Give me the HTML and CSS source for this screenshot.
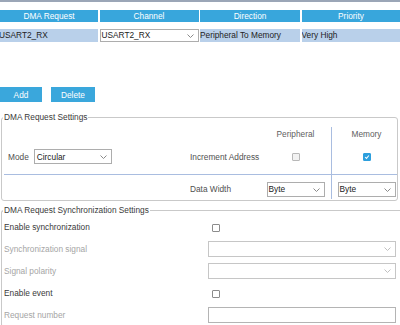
FILE: index.html
```html
<!DOCTYPE html>
<html lang="en">
  <head>
    <meta charset="UTF-8" />
    <title>DMA Settings</title>
    <link rel="stylesheet" href="styles.css">
  </head>
  <body>
    <div class="topline"></div>

    <div class="dma-table">
      <div class="th">DMA Request</div>
      <div class="th">Channel</div>
      <div class="th">Direction</div>
      <div class="th">Priority</div>

      <div class="td first">USART2_RX</div>
      <div class="td plain">
        <div class="select small">
          <span>USART2_RX</span>
          <svg class="chev" viewBox="0 0 7 4"><polyline points="0.5,0.5 3.5,3.5 6.5,0.5" /></svg>
        </div>
      </div>
      <div class="td">Peripheral To Memory</div>
      <div class="td">Very High</div>
    </div>

    <div class="actions">
      <button class="btn add">Add</button>
      <button class="btn delete">Delete</button>
    </div>

    <fieldset class="group settings">
      <legend>DMA Request Settings</legend>
      <div class="settings-grid">
        <div></div>
        <div></div>
        <div class="col-head">Peripheral</div>
        <div class="col-head mem">Memory</div>

        <div class="cell mode">
          <span>Mode</span>
          <div class="select mode-select">
            <span>Circular</span>
            <svg class="chev" viewBox="0 0 7 4"><polyline points="0.5,0.5 3.5,3.5 6.5,0.5" /></svg>
          </div>
        </div>
        <div class="cell label">Increment Address</div>
        <div class="cell center"><span class="check disabled"></span></div>
        <div class="cell center mem">
          <span class="check checked">
            <svg viewBox="0 0 8 8"><polyline points="1.5,4 3.3,5.8 6.5,2" /></svg>
          </span>
        </div>

        <div class="cell sep first-sep"></div>
        <div class="cell sep label">Data Width</div>
        <div class="cell sep center">
          <div class="select width-select">
            <span>Byte</span>
            <svg class="chev" viewBox="0 0 7 4"><polyline points="0.5,0.5 3.5,3.5 6.5,0.5" /></svg>
          </div>
        </div>
        <div class="cell sep center mem">
          <div class="select width-select">
            <span>Byte</span>
            <svg class="chev" viewBox="0 0 7 4"><polyline points="0.5,0.5 3.5,3.5 6.5,0.5" /></svg>
          </div>
        </div>
      </div>
    </fieldset>

    <fieldset class="group sync">
      <legend>DMA Request Synchronization Settings</legend>
      <div class="sync-grid">
        <div class="sync-label">Enable synchronization</div>
        <div><span class="check box-offset"></span></div>

        <div class="sync-label off">Synchronization signal</div>
        <div class="select off">
          <span></span>
          <svg class="chev" viewBox="0 0 7 4"><polyline points="0.5,0.5 3.5,3.5 6.5,0.5" /></svg>
        </div>

        <div class="sync-label off">Signal polarity</div>
        <div class="select off">
          <span></span>
          <svg class="chev" viewBox="0 0 7 4"><polyline points="0.5,0.5 3.5,3.5 6.5,0.5" /></svg>
        </div>

        <div class="sync-label">Enable event</div>
        <div><span class="check box-offset"></span></div>

        <div class="sync-label off">Request number</div>
        <div class="text-input"></div>
      </div>
    </fieldset>
  </body>
</html>
```

FILE: styles.css
```css
* {
  box-sizing: border-box;
}

body {
  margin: 0;
  width: 400px;
  height: 325px;
  overflow: hidden;
  background-color: #ffffff;
  font-family: "Liberation Sans", Arial, sans-serif;
  font-size: 8.3px;
  color: #2b2b2b;
}

.topline {
  height: 2px;
  background-color: #9ba6b7;
}

/* request table */
.dma-table {
  display: grid;
  grid-template-columns: 98px 99px 100px 99px;
  column-gap: 1.5px;
  margin-top: 8px;
}

.th {
  height: 12px;
  line-height: 12px;
  margin-bottom: 7px;
  background-color: #38a6dc;
  color: #ffffff;
  text-align: center;
}

.td {
  height: 13px;
  line-height: 13px;
  background-color: #b9d0ea;
  color: #222222;
  white-space: nowrap;
  overflow: hidden;
}

.td.first {
  text-indent: -1px;
}

.td.plain {
  background-color: #ffffff;
}

/* drop downs */
.select {
  display: flex;
  align-items: center;
  justify-content: space-between;
  height: 16px;
  padding: 0 4px 0 2px;
  border: 1px solid #adadad;
  background-color: #ffffff;
  color: #222222;
  white-space: nowrap;
}

.select.small {
  height: 13px;
  padding-left: 1px;
}

.chev {
  width: 7px;
  height: 4px;
  fill: none;
  stroke: #8a8a8a;
  stroke-width: 1;
}

.select.off {
  border-color: #c6c6c6;
}

.select.off .chev {
  stroke: #c0c0c0;
}

/* buttons */
.actions {
  display: flex;
  gap: 9px;
  margin-top: 45px;
}

.btn {
  height: 15px;
  padding: 0;
  border: none;
  background-color: #3aa7dc;
  color: #ffffff;
  font: inherit;
}

.btn.add {
  width: 42px;
}

.btn.delete {
  width: 44px;
}

/* groups */
.group {
  min-width: 0;
  margin: 10px 2px 0 1px;
  padding: 5px 0 1px 1px;
  border: 1px solid #c9c9c9;
  border-radius: 3px;
}

.group legend {
  padding: 0 1px;
  line-height: 10px;
  color: #3a3a3a;
}

.settings-grid {
  display: grid;
  grid-template-columns: 187px 70px 71px 1fr;
  grid-template-rows: 14px 33px 25px;
}

.col-head {
  line-height: 14px;
  text-align: center;
  color: #606060;
}

.cell {
  display: flex;
  align-items: center;
  padding-bottom: 2px;
  color: #505050;
}

.cell.center {
  justify-content: center;
}

.mem {
  border-left: 1px solid #a9bde0;
  padding-left: 4px;
}

.mode {
  gap: 5px;
  padding-left: 5px;
}

.mode-select {
  width: 78px;
  height: 15px;
}

.width-select {
  width: 58px;
  height: 15px;
  padding-left: 1px;
}

.cell.sep {
  align-items: flex-end;
  border-top: 1px solid #a9bde0;
  line-height: 15px;
}

.first-sep {
  margin-left: 1px;
}

/* checkboxes */
.check {
  display: inline-block;
  width: 8px;
  height: 8px;
  border: 1px solid #8c8c8c;
  border-radius: 1px;
  background-color: #ffffff;
}

.check.disabled {
  border-color: #b8b8b8;
  background-color: #f2f2f2;
}

.check.checked {
  border-color: #2d9fdd;
  background-color: #2d9fdd;
}

.check svg {
  display: block;
  width: 6px;
  height: 6px;
  fill: none;
  stroke: #ffffff;
  stroke-width: 1.4;
}

.box-offset {
  margin-left: 4px;
  vertical-align: middle;
}

/* synchronization: the group runs on past the right edge */
.group.sync {
  margin: 4px 0 0 1px;
  padding: 1px 0 0 1px;
  border-right: none;
  border-top-right-radius: 0;
  border-bottom-right-radius: 0;
}

.sync-grid {
  display: grid;
  grid-template-columns: 205px 188px;
  grid-auto-rows: 22px;
  align-items: center;
}

.sync-label {
  padding-left: 1px;
  color: #3a3a3a;
}

.sync-label.off {
  color: #a5a5a5;
}

.text-input {
  height: 16px;
  border: 1px solid #b4b4b4;
  background-color: #ffffff;
}
```
